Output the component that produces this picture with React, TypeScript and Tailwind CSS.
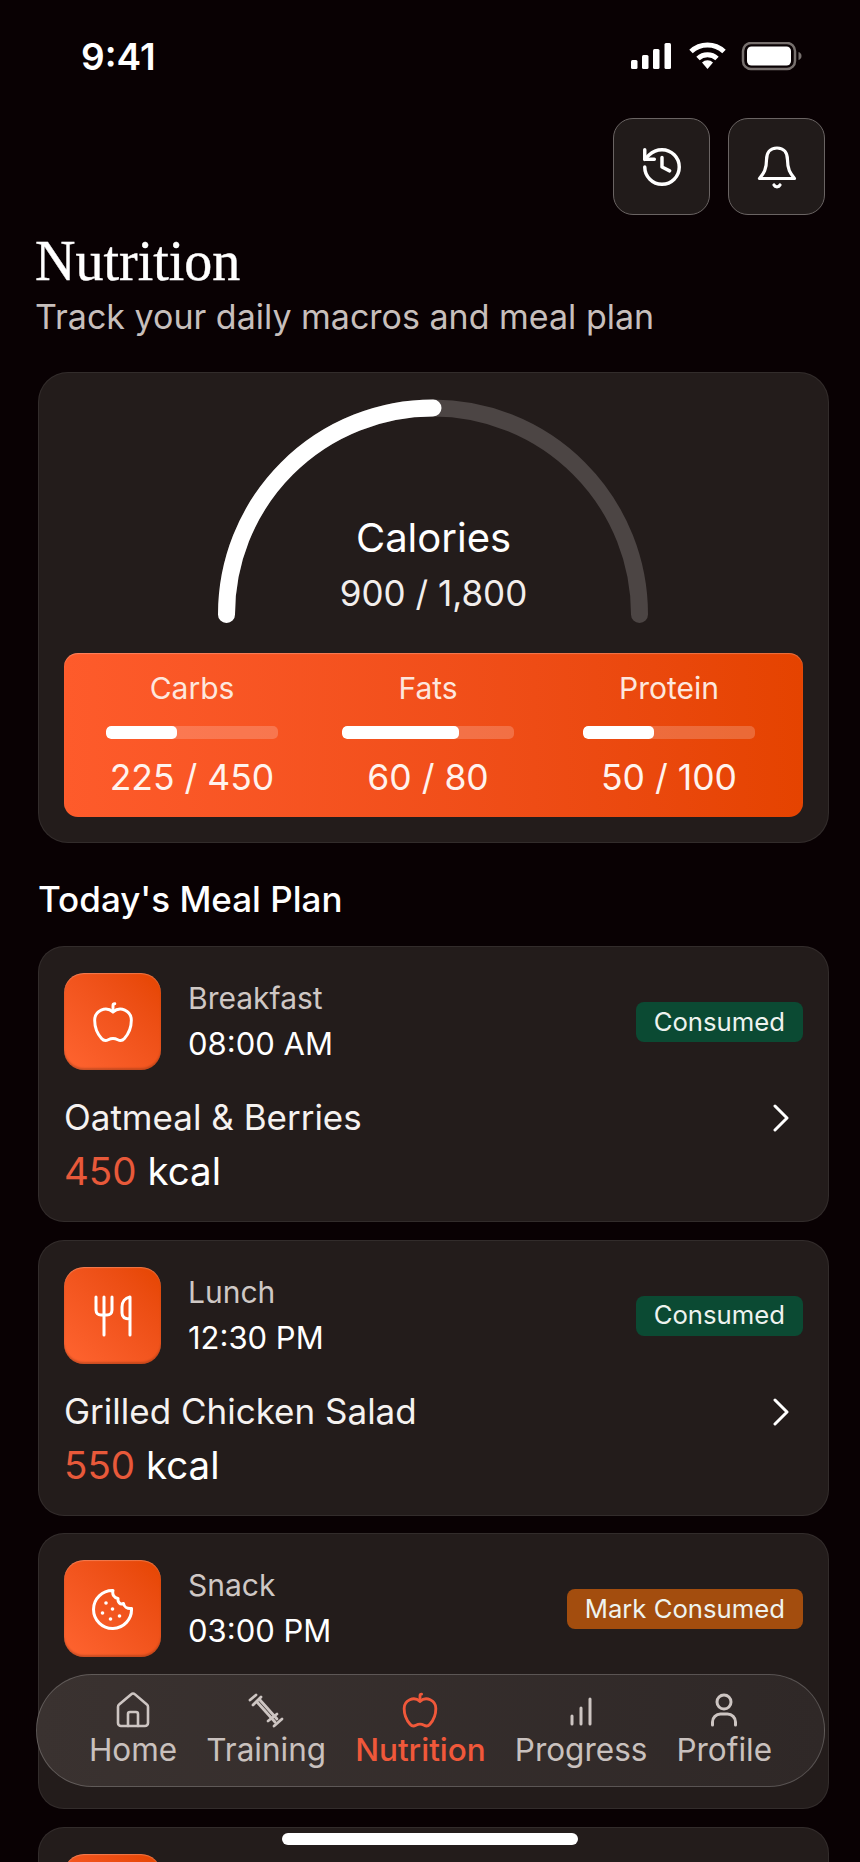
import React from "react";
import { Apple, History } from "lucide-react";

function AppleIcon({ size, color, sw }: { size: number; color: string; sw: number }) {
  return <Apple size={size} color={color} strokeWidth={sw} />;
}

function HomeIcon() {
  return (
    <svg width="38" height="38" viewBox="0 0 38 38" fill="none" stroke="#cdc5c2" strokeWidth="2.600" strokeLinecap="round" strokeLinejoin="round">
      <path d="M4 16a3 3 0 0 1 1.100-2.400L17 3.400a3 3 0 0 1 4 0l11.900 10.200A3 3 0 0 1 34 16v16a3 3 0 0 1-3 3H7a3 3 0 0 1-3-3z" />
      <path d="M14 35V23a2 2 0 0 1 2-2h6a2 2 0 0 1 2 2v12" />
    </svg>
  );
}

function ForkKnife() {
  return (
    <svg width="42" height="44" viewBox="0 0 42 44" fill="none" stroke="white" strokeWidth="3" strokeLinecap="round" strokeLinejoin="round">
      <path d="M4 4v13c0 3 2 5 5 5h6c3 0 5-2 5-5V4" />
      <path d="M12 4v38" />
      <path d="M38 42V4c-5 1-8 5-8 10v6c0 4 3 6 8 6" />
    </svg>
  );
}

function CookieIcon() {
  return (
    <svg width="42" height="42" viewBox="0 0 42 42" fill="none" stroke="white" strokeWidth="3" strokeLinecap="round" strokeLinejoin="round">
      <path d="M21 2.500C20 6.500 22 10 26 10.500C25.500 14 28 17 31.500 15.500C32 18.500 35 21 39.500 20.500A19 19 0 1 1 21 2.500Z" />
      <g fill="white" stroke="none">
        <circle cx="14" cy="15" r="1.800" />
        <circle cx="20.500" cy="21" r="1.800" />
        <circle cx="10.500" cy="25" r="1.800" />
        <circle cx="27.500" cy="28" r="1.800" />
        <circle cx="18.500" cy="31" r="1.800" />
      </g>
    </svg>
  );
}

function BellIcon() {
  return (
    <svg width="40" height="44" viewBox="0 0 40 44" fill="none" stroke="white" strokeWidth="3.200" strokeLinecap="round" strokeLinejoin="round">
      <path d="M20 3C13 3 9.500 8 9.500 15C9.500 24 7 28 2.500 33.500H37.500C33 28 30.500 24 30.500 15C30.500 8 27 3 20 3Z" />
      <path d="M17 40a3.400 3.400 0 0 0 6 0" />
    </svg>
  );
}

function DumbbellIcon() {
  return (
    <svg width="38" height="38" viewBox="0 0 38 38" fill="none" stroke="#cdc5c2" strokeWidth="2.800" strokeLinecap="round" strokeLinejoin="round">
      <path d="M3 9l6-5" />
      <path d="M6 14l8-8" />
      <path d="M10 11l18 20" />
      <path d="M13 9l17 19" />
      <path d="M21 30l9-7" />
      <path d="M27 35l8-7" />
    </svg>
  );
}

function BarsIcon() {
  return (
    <svg width="36" height="36" viewBox="0 0 36 36" fill="none" stroke="#cdc5c2" strokeWidth="3" strokeLinecap="round">
      <path d="M9 32v-8" />
      <path d="M18 32V16" />
      <path d="M27 32V7" />
    </svg>
  );
}

function PersonIcon() {
  return (
    <svg width="36" height="36" viewBox="0 0 36 36" fill="none" stroke="#cdc5c2" strokeWidth="3" strokeLinecap="round">
      <circle cx="18" cy="10" r="7" />
      <path d="M6.500 33v-3a8 8 0 0 1 8-8h7a8 8 0 0 1 8 8v3" />
    </svg>
  );
}

function Macro({ label, value, pct, className }: { label: string; value: string; pct: number; className?: string }) {
  return (
    <div className={"flex w-[172px] flex-col items-center " + (className ?? "")}>
      <div className="text-[30px] leading-[34px] text-[#fde7de]">{label}</div>
      <div className="mt-[21px] h-[13px] w-full overflow-hidden rounded-[5px] bg-white/20">
        <div className="h-full rounded-[5px] bg-white" style={{ width: pct + "%" }} />
      </div>
      <div className="mt-[19px] whitespace-nowrap text-[35.500px] leading-[40px] text-[#fff3ee]">{value}</div>
    </div>
  );
}

function Meal({
  icon,
  title,
  time,
  badge,
  badgeClass,
  name,
  kcal,
}: {
  icon: React.ReactNode;
  title?: string;
  time?: string;
  badge?: string;
  badgeClass?: string;
  name?: string;
  kcal?: string;
}) {
  return (
    <div className="h-[276px] shrink-0 rounded-[26px] border border-white/[0.07] bg-[#231c1b] px-[25px] pt-[26px]">
      <div className="flex items-start">
        <div className="flex h-[97px] w-[97px] items-center justify-center rounded-[20px] bg-linear-to-tr from-[#ff6430] to-[#e54500] shadow-[inset_0_1px_1px_rgba(255,255,255,0.25),inset_0_-2px_2px_rgba(0,0,0,0.2)]">
          {icon}
        </div>
        {title && (
          <div className="ml-[27px] mt-[7px] flex flex-col">
            <div className="text-[30px] leading-[36px] text-[#cfc8c5]">{title}</div>
            <div className="mt-[10px] text-[31px] leading-[36px] text-white">{time}</div>
          </div>
        )}
        {badge && (
          <div className={"ml-auto mt-[29px] flex h-[40px] items-center rounded-[8px] px-[18px] text-[25.700px] text-[#eef3ef] " + badgeClass}>
            {badge}
          </div>
        )}
      </div>
      {name && (
        <>
          <div className="mt-[25px] flex items-center justify-between pr-[13px]">
            <div className="text-[35px] leading-[44px] text-[#f5f2f0]">{name}</div>
            <svg className="mt-[2px]" width="18" height="28" viewBox="0 0 18 28" fill="none" stroke="white" strokeWidth="3" strokeLinecap="round" strokeLinejoin="round">
              <path d="M3 2l12 12L3 26" />
            </svg>
          </div>
          <div className="mt-[9px] text-[38.500px] leading-[46px] text-white">
            <span className="text-[#e8593a]">{kcal}</span> kcal
          </div>
        </>
      )}
    </div>
  );
}

function NavItem({ icon, label, active }: { icon: React.ReactNode; label: string; active?: boolean }) {
  return (
    <div className="flex flex-col items-center">
      <div className="flex h-[38px] items-center justify-center">{icon}</div>
      <div className={"mt-[3px] whitespace-nowrap text-[31.500px] leading-[36px] " + (active ? "font-medium text-[#f0583a]" : "text-[#c9c1be]")}>{label}</div>
    </div>
  );
}

export default function App() {
  return (
    <div className="relative h-[1862px] w-[860px] overflow-hidden bg-[#090103] font-['Inter',sans-serif]">
      <div className="flex h-[118px] items-start justify-between pl-[81px] pr-[57px] pt-[36px]">
        <div className="text-[37px] font-semibold leading-[42px] text-white">9:41</div>
        <svg className="mt-[6px]" width="172" height="30" viewBox="0 0 172 30" fill="white">
          <rect x="0" y="18" width="6.500" height="9" rx="1.500" />
          <rect x="11" y="13" width="6.500" height="14" rx="1.500" />
          <rect x="22" y="7" width="6.500" height="20" rx="1.500" />
          <rect x="33.500" y="1" width="6.500" height="26" rx="1.500" />
          <g fill="none" stroke="white" strokeWidth="5">
            <path d="M60 9.500a24 24 0 0 1 33 0" />
            <path d="M67 16.500a14 14 0 0 1 19 0" />
          </g>
          <path d="M76.500 27L71 20.500a8 8 0 0 1 11 0Z" />
          <rect x="112" y="1" width="52" height="26" rx="8" fill="none" stroke="#77706e" strokeWidth="2.500" />
          <rect x="116" y="4.500" width="44" height="19" rx="4.500" />
          <path d="M167.500 10v8c1.800-.5 3-2 3-4s-1.200-3.500-3-4Z" fill="#77706e" />
        </svg>
      </div>

      <div className="flex justify-end gap-[18px] pr-[35px]">
        <div className="flex h-[97px] w-[97px] items-center justify-center rounded-[20px] border border-[#6a6463] bg-[#211b1a]">
          <History size={46} color="white" strokeWidth={1.800} />
        </div>
        <div className="flex h-[97px] w-[97px] items-center justify-center rounded-[20px] border border-[#6a6463] bg-[#211b1a]">
          <BellIcon />
        </div>
      </div>

      <div className="ml-[35px] mt-[14px] font-['Liberation_Serif',serif] text-[56px] leading-[64px] text-white [-webkit-text-stroke:0.4px_white]">Nutrition</div>
      <div className="ml-[35px] mt-[4px] text-[34px] leading-[40px] text-[#c7bfbc]">Track your daily macros and meal plan</div>

      <div className="ml-[38px] mr-[31px] mt-[35px]">
        <div className="rounded-[30px] border border-white/[0.07] bg-[#231c1b] px-[25px] pb-[25px] pt-[25px]">
          <div className="relative flex justify-center pr-[2px]">
            <svg width="430" height="225" viewBox="0 0 430 225" fill="none" strokeWidth="17" strokeLinecap="round">
              <path d="M8.500 216.500A206.500 206.500 0 0 1 421.500 216.500" stroke="#4c4544" />
              <path d="M8.500 216.500A206.500 206.500 0 0 1 215 10" stroke="white" />
            </svg>
            <div className="absolute left-0 right-0 top-[117px] flex flex-col items-center">
              <div className="text-[40px] leading-[46px] text-white">Calories</div>
              <div className="mt-[10px] text-[35px] leading-[44px] text-[#f2eeec]">900 / 1,800</div>
            </div>
          </div>
          <div className="mt-[30px] flex h-[164px] rounded-[14px] bg-linear-to-r from-[#fe5b2b] to-[#e54300] pl-[42px] pt-[18px] shadow-[inset_0_1px_1px_rgba(255,255,255,0.25)]">
            <Macro label="Carbs" value="225 / 450" pct={41} />
            <Macro label="Fats" value="60 / 80" pct={68} className="ml-[64px]" />
            <Macro label="Protein" value="50 / 100" pct={41} className="ml-[69px]" />
          </div>
        </div>

        <div className="mt-[35px] text-[35px] font-medium leading-[42px] text-white">Today's Meal Plan</div>

        <div className="mt-[26px] flex flex-col gap-[17.600px]">
          <Meal icon={<AppleIcon size={44} color="white" sw={1.600} />} title="Breakfast" time="08:00 AM" badge="Consumed" badgeClass="bg-[#0b4a33]" name="Oatmeal & Berries" kcal="450" />
          <Meal icon={<ForkKnife />} title="Lunch" time="12:30 PM" badge="Consumed" badgeClass="bg-[#0b4a33]" name="Grilled Chicken Salad" kcal="550" />
          <Meal icon={<CookieIcon />} title="Snack" time="03:00 PM" badge="Mark Consumed" badgeClass="bg-[#a34d0e]" />
          <Meal icon={null} />
        </div>
      </div>

      <div className="absolute left-[36px] top-[1674px] flex h-[113px] w-[789px] justify-center gap-[29px] rounded-[56px] border border-white/20 bg-linear-to-r from-[#3a3230] to-[#2f2827] pt-[16px]">
        <NavItem label="Home" icon={<HomeIcon />} />
        <NavItem label="Training" icon={<DumbbellIcon />} />
        <NavItem label="Nutrition" active icon={<AppleIcon size={38} color="#f0583a" sw={1.800} />} />
        <NavItem label="Progress" icon={<BarsIcon />} />
        <NavItem label="Profile" icon={<PersonIcon />} />
      </div>

      <div className="absolute left-[282px] top-[1833px] h-[12px] w-[296px] rounded-full bg-white" />
    </div>
  );
}
